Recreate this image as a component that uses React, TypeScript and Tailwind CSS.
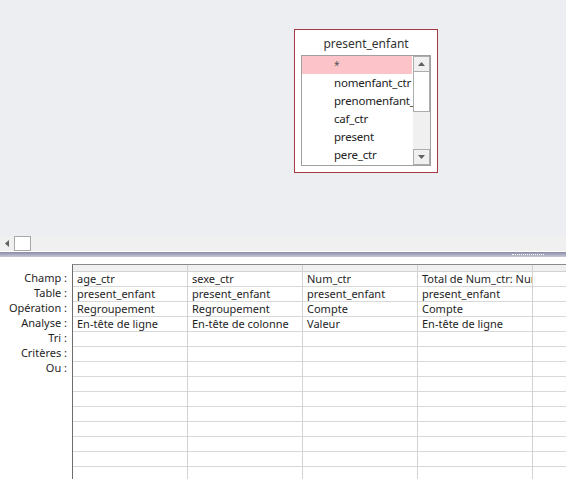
import React from 'react';

const fields = ['*', 'nomenfant_ctr', 'prenomenfant_', 'caf_ctr', 'present', 'pere_ctr'];

const labels = ['Champ :', 'Table :', 'Opération :', 'Analyse :', 'Tri :', 'Critères :', 'Ou :'];

const columns = [
  ['age_ctr', 'present_enfant', 'Regroupement', 'En-tête de ligne'],
  ['sexe_ctr', 'present_enfant', 'Regroupement', 'En-tête de colonne'],
  ['Num_ctr', 'present_enfant', 'Compte', 'Valeur'],
  ['Total de Num_ctr: Num_ctr', 'present_enfant', 'Compte', 'En-tête de ligne'],
  ['', '', '', ''],
];

const ROWS = 14;

function TableBox() {
  return (
    <div className="absolute left-[294px] top-[29px] w-[144px] h-[144px] border border-[#a53a44] bg-white">
      <div className="h-[25px] flex items-end justify-center pb-[2px] text-[12px] text-[#333]">present_enfant</div>
      <div className="ml-[6px] w-[130px] h-[111px] border border-[#a0a0a0] flex">
        <div className="flex-1 min-w-0 flex flex-col">
          {fields.map((f, i) => (
            <div
              key={f}
              className={`h-[18px] flex items-center pl-[32px] whitespace-nowrap overflow-hidden ${i === 0 ? 'bg-[#fcc4c8] text-[10px] text-[#555] mr-[1px]' : 'text-[11.5px] text-[#222] tracking-[-0.2px]'}`}
            >
              {f}
            </div>
          ))}
        </div>
        <div className="w-[17px] shrink-0 bg-[#f0f0f0] flex flex-col">
          <div className="h-[16px] border border-[#adadad] bg-[#f0f0f0] flex items-center justify-center">
            <svg width="7" height="4" viewBox="0 0 7 4"><path d="M3.5 0 L7 4 L0 4 Z" fill="#606060" /></svg>
          </div>
          <div className="h-[40px] border border-[#adadad] border-t-0 bg-white" />
          <div className="flex-1" />
          <div className="h-[16px] border border-[#adadad] bg-[#f0f0f0] flex items-center justify-center">
            <svg width="7" height="4" viewBox="0 0 7 4"><path d="M0 0 L7 0 L3.5 4 Z" fill="#606060" /></svg>
          </div>
        </div>
      </div>
    </div>
  );
}

export default function App() {
  return (
    <div className="w-[566px] h-[479px] overflow-hidden bg-white" style={{ fontFamily: '"Noto Sans", "Open Sans", sans-serif' }}>
      <div className="relative h-[236px] bg-[#eceef2]">
        <TableBox />
      </div>

      <div className="h-[15px] bg-[#f0f0f0] flex items-stretch">
        <div className="w-[14px] flex items-center justify-center">
          <svg width="4" height="7" viewBox="0 0 4 7"><path d="M0 3.5 L4 0 L4 7 Z" fill="#606060" /></svg>
        </div>
        <div className="w-[17px] bg-white border border-[#a8a8a8]" />
      </div>

      <div className="h-[1px] bg-white" />
      <div className="h-[5px] bg-gradient-to-b from-[#8b8aa6] to-[#c9c9d8] flex justify-end pr-[22px] items-center">
        <div className="w-[32px] h-[2px] border-t border-dotted border-white" />
      </div>

      <div className="flex pt-[7px]">
        <div className="w-[72px] shrink-0 pt-[7px] flex flex-col">
          {labels.map(l => (
            <div key={l} className="h-[15px] flex items-center justify-end pr-[5px] text-[11px] text-[#1e1e1e] whitespace-nowrap">
              {l}
            </div>
          ))}
        </div>
        <div className="flex border-l border-[#6d6d6d] border-t border-t-[#8a8a8a]">
          {columns.map((col, ci) => (
            <div key={ci} className="w-[115px] shrink-0 border-r border-[#d2d2d2] flex flex-col">
              <div className="h-[7px] bg-[#f0f0f0] border-b border-[#d2d2d2]" />
              {Array.from({ length: ROWS }).map((_, ri) => (
                <div key={ri} className="h-[15px] border-b border-[#d9d9d9] flex items-center pl-[4px] text-[11px] text-[#1e1e1e] whitespace-nowrap overflow-hidden">
                  {col[ri] || ''}
                </div>
              ))}
            </div>
          ))}
        </div>
      </div>
    </div>
  );
}
